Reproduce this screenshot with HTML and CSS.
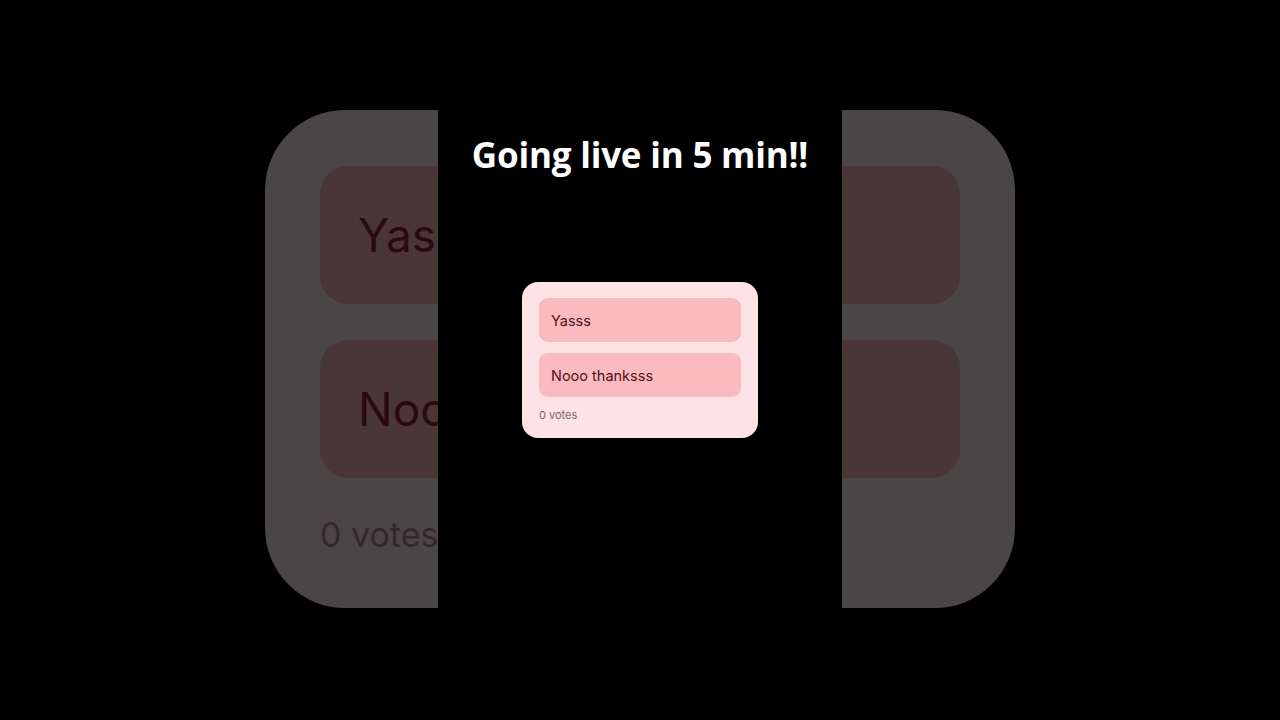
FILE: index.html
```html
<!DOCTYPE html>
<html>
<head>
<meta charset="utf-8">
<link rel="stylesheet" href="styles.css">
</head>
<body>
<div class="stage">
  <div class="backdrop">
    <div class="slice slice-left">
      <div class="bg-card">
        <div class="bg-option"><span class="bg-text">Yasss</span></div>
        <div class="bg-option"><span class="bg-text">Nooo thanksss</span></div>
        <div class="bg-votes"><span class="bg-text-votes">0 votes</span></div>
      </div>
    </div>
    <div class="gap"></div>
    <div class="slice slice-right">
      <div class="bg-card">
        <div class="bg-option"></div>
        <div class="bg-option"></div>
      </div>
    </div>
  </div>
  <div class="column">
    <h1 class="title">Going live in 5 min!!</h1>
    <div class="poll">
      <div class="option">Yasss</div>
      <div class="option">Nooo thanksss</div>
      <div class="votes">0 votes</div>
    </div>
  </div>
</div>
</body>
</html>
```
FILE: styles.css
```css
html, body {
  margin: 0;
  padding: 0;
  background: #000;
}
.stage {
  position: relative;
  width: 1280px;
  height: 720px;
  overflow: hidden;
  display: flex;
  justify-content: center;
  background: #000;
}
.backdrop {
  position: absolute;
  inset: 0;
  display: flex;
}
.slice {
  overflow: hidden;
  padding-top: 110px;
  height: 720px;
  box-sizing: border-box;
}
.slice-left {
  width: 438px;
  flex: none;
}
.gap {
  width: 404px;
  flex: none;
}
.slice-right {
  width: 438px;
  flex: none;
}
.slice-left .bg-card {
  margin-left: 265px;
}
.slice-right .bg-card {
  margin-left: -577px;
}
.bg-card {
  width: 750px;
  height: 498px;
  box-sizing: border-box;
  background: #4a4546;
  border-radius: 80px;
  padding: 56px 55px 0 55px;
  display: flex;
  flex-direction: column;
  gap: 36px;
  font-family: Inter, "Noto Sans", sans-serif;
}
.bg-option {
  height: 138px;
  flex: none;
  background: #4a3637;
  border-radius: 28px;
  display: flex;
  align-items: center;
  padding-left: 38px;
  color: #2a0a0e;
  font-size: 46px;
  white-space: nowrap;
}
.bg-text {
  display: block;
  max-width: 80px;
  overflow: hidden;
  white-space: nowrap;
}
.bg-votes {
  align-self: flex-start;
  color: #33282a;
  font-size: 34px;
  white-space: nowrap;
}
.bg-text-votes {
  display: block;
  max-width: 118px;
  overflow: hidden;
  white-space: nowrap;
}
.column {
  position: relative;
  width: 404px;
  height: 720px;
  background: #000;
  display: flex;
  flex-direction: column;
  align-items: center;
}
.title {
  margin: 131px 0 0 0;
  color: #fff;
  font-family: "Open Sans", sans-serif;
  font-weight: 700;
  font-size: 35px;
  line-height: 48px;
  letter-spacing: -0.2px;
}
.poll {
  margin-top: 103px;
  width: 236px;
  box-sizing: border-box;
  background: #fde3e5;
  border-radius: 16px;
  padding: 16px 17px 16px 17px;
  display: flex;
  flex-direction: column;
  gap: 11px;
  font-family: Inter, "Noto Sans", sans-serif;
}
.option {
  height: 44px;
  background: #f9bbc0;
  border-radius: 9px;
  display: flex;
  align-items: center;
  padding-left: 12px;
  color: #5a0c15;
  font-size: 14.5px;
}
.votes {
  color: #77676a;
  font-size: 11px;
  line-height: 14px;
}
```
